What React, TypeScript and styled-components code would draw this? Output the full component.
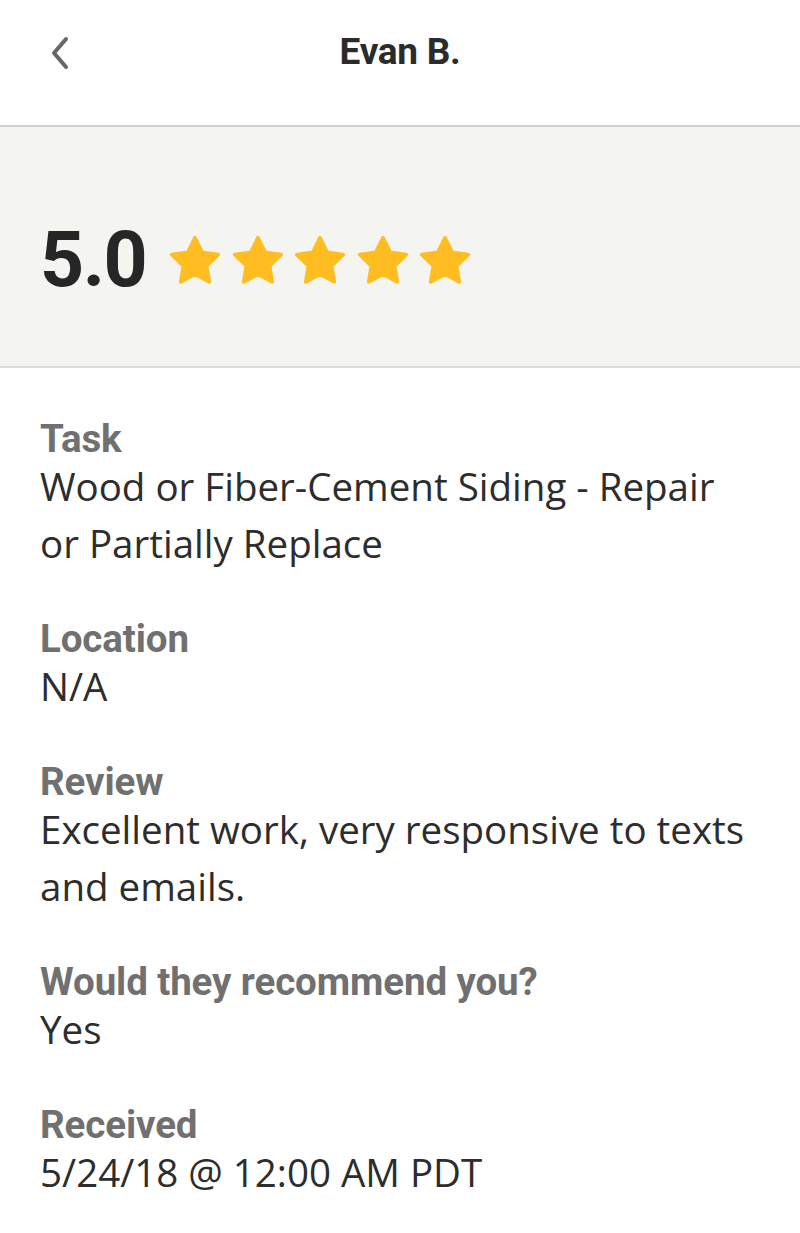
import React from "react";
import styled, { createGlobalStyle } from "styled-components";

const GlobalStyle = createGlobalStyle`
  html, body {
    margin: 0;
    padding: 0;
    background: #ffffff;
  }
  body {
    font-family: Roboto, "Noto Sans", "Liberation Sans", sans-serif;
    -webkit-font-smoothing: antialiased;
  }
`;

const Page = styled.div`
  width: 800px;
  min-height: 1233px;
  background: #ffffff;
  display: flex;
  flex-direction: column;
`;

const Header = styled.header`
  position: relative;
  height: 125px;
  border-bottom: 2px solid #d2d2d0;
  display: flex;
  justify-content: center;
  box-sizing: content-box;
`;

const BackButton = styled.button`
  position: absolute;
  left: 40px;
  top: 30px;
  width: 40px;
  height: 46px;
  padding: 0;
  border: none;
  background: transparent;
  display: flex;
  align-items: center;
  justify-content: center;
  color: #676767;
  cursor: pointer;
`;

const Title = styled.h1`
  margin: 0;
  padding-top: 28px;
  font-size: 37px;
  line-height: 48px;
  font-weight: 700;
  color: #2b2b2b;
  letter-spacing: -0.3px;
`;

const RatingPanel = styled.section`
  height: 241px;
  background: #f4f4f1;
  border-bottom: 2px solid #dcdcd8;
  display: flex;
  align-items: center;
  padding: 28px 40px 0;
  box-sizing: border-box;
  gap: 24px;
`;

const Score = styled.span`
  font-size: 77px;
  line-height: 1;
  font-weight: 700;
  color: #262626;
  letter-spacing: -1.5px;
`;

const Stars = styled.div`
  display: flex;
  gap: 12.5px;
`;

const Details = styled.dl`
  margin: 0;
  padding: 51px 40px 40px;
  display: flex;
  flex-direction: column;
  gap: 47px;
`;

const Field = styled.div`
  display: flex;
  flex-direction: column;
`;

const Label = styled.dt`
  font-size: 38.5px;
  line-height: 39px;
  font-weight: 700;
  color: #707070;
  letter-spacing: -0.1px;
`;

const Value = styled.dd`
  margin: 0;
  font-family: "Open Sans", Roboto, sans-serif;
  font-size: 38.5px;
  line-height: 57px;
  font-weight: 400;
  color: #2d2d2d;
  letter-spacing: 0;
  max-width: 716px;
`;

const Chevron = () => (
  <svg width="22" height="34" viewBox="0 0 22 34" fill="none">
    <path
      d="M17 3 L5 17 L17 31"
      stroke="currentColor"
      strokeWidth="4"
      strokeLinecap="round"
      strokeLinejoin="round"
    />
  </svg>
);

const Star = () => (
  <svg width="50" height="50" viewBox="1.3 1.4 21.4 21.4">
    <polygon
      points="12 2.2 15.05 8.4 21.9 9.35 16.95 14.15 18.1 21 12 17.75 5.9 21 7.05 14.15 2.1 9.35 8.95 8.4"
      fill="#FFBD22"
      stroke="#FFBD22"
      strokeWidth="1.6"
      strokeLinejoin="round"
    />
  </svg>
);

const fields = [
  { label: "Task", value: "Wood or Fiber-Cement Siding - Repair or Partially Replace" },
  { label: "Location", value: "N/A" },
  { label: "Review", value: "Excellent work, very responsive to texts and emails." },
  { label: "Would they recommend you?", value: "Yes" },
  { label: "Received", value: "5/24/18 @ 12:00 AM PDT" },
];

export default function App() {
  return (
    <>
      <GlobalStyle />
      <Page>
        <Header>
          <BackButton aria-label="Back">
            <Chevron />
          </BackButton>
          <Title>Evan B.</Title>
        </Header>
        <RatingPanel>
          <Score>5.0</Score>
          <Stars>
            {[0, 1, 2, 3, 4].map((i) => (
              <Star key={i} />
            ))}
          </Stars>
        </RatingPanel>
        <Details>
          {fields.map((f) => (
            <Field key={f.label}>
              <Label>{f.label}</Label>
              <Value>{f.value}</Value>
            </Field>
          ))}
        </Details>
      </Page>
    </>
  );
}
